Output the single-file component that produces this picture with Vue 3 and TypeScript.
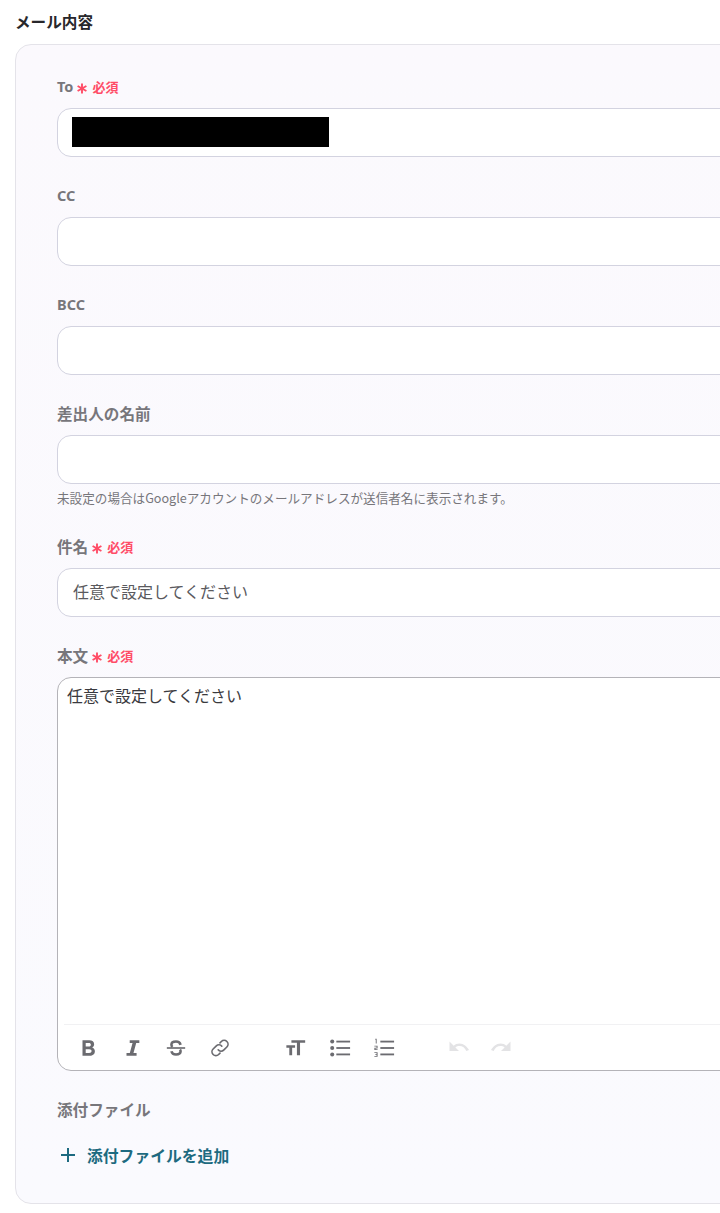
<script setup lang="ts">
const plainFields = [
  { label: 'CC' },
  { label: 'BCC' },
]
</script>

<template>
  <div class="page">
    <h2 class="title">メール内容</h2>
    <section class="panel">
      <div class="field">
        <div class="label"><span class="latin">To</span><svg class="star" viewBox="0 0 10 11"><path d="M5 0.500v10M0.600 3l8.800 5M0.600 8l8.800-5"/></svg><span class="req">必須</span></div>
        <div class="input"><span class="redact"></span></div>
      </div>
      <div v-for="f in plainFields" :key="f.label" class="field">
        <div class="label"><span class="latin">{{ f.label }}</span></div>
        <div class="input"></div>
      </div>
      <div class="field with-help">
        <div class="label">差出人の名前</div>
        <div class="input"></div>
        <p class="help">未設定の場合はGoogleアカウントのメールアドレスが送信者名に表示されます。</p>
      </div>
      <div class="field">
        <div class="label">件名<svg class="star" viewBox="0 0 10 11"><path d="M5 0.500v10M0.600 3l8.800 5M0.600 8l8.800-5"/></svg><span class="req">必須</span></div>
        <div class="input text">任意で設定してください</div>
      </div>
      <div class="field">
        <div class="label">本文<svg class="star" viewBox="0 0 10 11"><path d="M5 0.500v10M0.600 3l8.800 5M0.600 8l8.800-5"/></svg><span class="req">必須</span></div>
        <div class="editor">
          <div class="body">任意で設定してください</div>
          <div class="toolbar">
            <svg class="ic" viewBox="0 0 24 24"><path fill="#6b6b70" fill-rule="evenodd" d="M6 3.500h7.500c3.200 0 5.200 1.700 5.200 4.300 0 1.600-.8 2.900-2.200 3.600 1.900.6 3 2.100 3 4.100 0 3-2.300 5-5.600 5H6V3.500zm3.500 3v3.900h3.400c1.400 0 2.200-.8 2.200-2s-.8-1.900-2.200-1.900H9.500zm0 6.800v4.200h3.800c1.600 0 2.600-.8 2.600-2.100s-1-2.100-2.600-2.100H9.500z"/></svg>
            <svg class="ic" viewBox="0 0 24 24"><path fill="#6b6b70" d="M9.500 3.500H20v3h-3.400l-3 11H17v3H6v-3h3.600l3-11H9.500z"/></svg>
            <svg class="ic" viewBox="0 0 24 24"><path fill="none" stroke="#6b6b70" stroke-width="2.800" d="M17 8.500C16.400 6.300 14.500 5 12 5c-3 0-5 1.400-5 3.500 0 1 .4 1.800 1.200 2.500M7 15.500c.5 2.200 2.600 3.500 5 3.500 3 0 5-1.400 5-3.500 0-.7-.2-1.300-.6-1.800"/><path fill="none" stroke="#6b6b70" stroke-width="1.800" d="M2 12h20"/></svg>
            <svg class="ic" viewBox="0 0 24 24"><g fill="none" stroke="#6b6b70" stroke-width="1.800" stroke-linecap="round"><path d="M10 14a4 4 0 0 0 6 .4l3.500-3.500a4.200 4.200 0 0 0-6-6L12 6.400"/><path d="M14 10a4 4 0 0 0-6-.4l-3.500 3.500a4.200 4.200 0 0 0 6 6L12 17.600"/></g></svg>
            <span class="sep"></span>
            <svg class="ic" viewBox="0 0 24 24"><path fill="#6b6b70" d="M7 3.500h15v2.800h-5.600V20H13V6.300H7zM1.500 9h9.500v2.600H7.800V20H4.700v-8.400H1.500z"/></svg>
            <svg class="ic" viewBox="0 0 24 24"><g fill="#6b6b70"><circle cx="3.500" cy="5" r="2.200"/><circle cx="3.500" cy="12" r="2.200"/><circle cx="3.500" cy="19" r="2.200"/><rect x="8" y="4" width="15" height="2"/><rect x="8" y="11" width="15" height="2"/><rect x="8" y="18" width="15" height="2"/></g></svg>
            <svg class="ic" viewBox="0 0 24 24"><g fill="#6b6b70"><rect x="8" y="4" width="15" height="2"/><rect x="8" y="11" width="15" height="2"/><rect x="8" y="18" width="15" height="2"/><path d="M2.500 2h1.500v5H3V3H2.500zM1.500 9.500h3.500v3H2.700v.8H5v.9H1.500v-2.500h2.400v-1.300H1.500zM1.500 16.500H5v5H1.500v-.9h2.400v-1.200H2.500v-.8h1.400v-1.200H1.500z"/></g></svg>
            <span class="sep narrow"></span>
            <svg class="ic wide" viewBox="0 0 24 24"><path fill="#e3e3e5" d="M1.500 5.500V15h9.500l-3.600-3.600c1.100-.8 2.500-1.300 4-1.300 3.100 0 5.800 2 6.900 4.900l2.700-.9C19.200 11 15.700 7.600 11.500 7.600 9.200 7.600 7.200 8.400 5.700 9.700z"/></svg>
            <svg class="ic wide" viewBox="0 0 24 24"><path fill="#e3e3e5" d="M22.500 5.500V15H13l3.600-3.600c-1.100-.8-2.500-1.300-4-1.300-3.100 0-5.800 2-6.900 4.900L3 14.100C4.800 11 8.300 7.600 12.500 7.600c2.300 0 4.300.8 5.800 2.100z"/></svg>
          </div>
        </div>
      </div>
      <div class="attach">
        <div class="label">添付ファイル</div>
        <button class="add" type="button">
          <svg class="plus" viewBox="0 0 14 14"><path fill="none" stroke="#1d6a80" stroke-width="2" d="M7 0v14M0 7h14"/></svg>
          添付ファイルを追加
        </button>
      </div>
    </section>
  </div>
</template>

<style>
html, body { margin: 0; overflow: hidden; background: #fff; }
</style>

<style scoped>
.page {
  width: 720px;
  height: 1213px;
  overflow: hidden;
  padding: 11px 0 0 15px;
  box-sizing: border-box;
  font-family: "Noto Sans CJK JP", "Noto Sans", sans-serif;
}
.title {
  margin: 0 0 12px;
  font-size: 15.6px;
  line-height: 21px;
  font-weight: 700;
  color: #27272b;
}
.panel {
  width: 1000px;
  height: 1160px;
  box-sizing: border-box;
  padding: 32px 0 0 41px;
  background: linear-gradient(#fbf9fd, #fafafe);
  border: 1px solid #e4e3e9;
  border-radius: 16px;
}
.field { margin-bottom: 29px; }
.field.with-help { margin-bottom: 30px; }
.label {
  display: flex;
  align-items: center;
  height: 19px;
  margin-bottom: 12px;
  font-size: 15.6px;
  line-height: 19px;
  font-weight: 700;
  color: #77767b;
  white-space: nowrap;
}
.latin { font-family: "Noto Sans", sans-serif; font-size: 14.5px; }
.star {
  width: 10px;
  height: 11px;
  flex: none;
  margin: 4px 5px 0 4px;
  fill: none;
  stroke: #ff4d67;
  stroke-width: 1.900;
}
.req { color: #ff4d67; font-size: 13px; }
.input {
  height: 49px;
  box-sizing: border-box;
  background: #fff;
  border: 1px solid #d3d3e0;
  border-radius: 14px;
  padding: 0 14px 2px;
  display: flex;
  align-items: center;
}
.text { font-size: 16px; color: #5a5a5e; padding-left: 15px; padding-bottom: 3px; }
.redact { width: 257px; height: 30px; background: #000; }
.help {
  margin: 5px 0 0;
  font-size: 12.6px;
  line-height: 18px;
  color: #77767b;
}
.editor {
  height: 394px;
  box-sizing: border-box;
  background: #fff;
  border: 1px solid #b4b3b8;
  border-radius: 14px;
  display: flex;
  flex-direction: column;
}
.body {
  flex: 1;
  padding: 6px 9px;
  font-size: 16px;
  line-height: 22px;
  color: #3a3a3e;
}
.toolbar {
  height: 45px;
  margin-left: 6px;
  border-top: 1px solid #f1f1f3;
  display: flex;
  align-items: center;
  padding-left: 13px;
  gap: 22px;
}
.ic { width: 22px; height: 22px; flex: none; }
.ic.wide { width: 24px; height: 24px; margin-right: -6px; }
.sep { width: 10px; flex: none; }
.sep.narrow { width: 9px; }
.attach { margin-top: -1px; }
.attach .label { height: 21px; line-height: 21px; margin-bottom: 0; }
.add {
  display: flex;
  align-items: center;
  gap: 12px;
  margin: 23px 0 0 4px;
  padding: 0;
  height: 24px;
  background: none;
  border: 0;
  font: inherit;
  font-size: 15.8px;
  font-weight: 700;
  color: #1d6a80;
}
.plus { width: 14px; height: 14px; }
</style>
